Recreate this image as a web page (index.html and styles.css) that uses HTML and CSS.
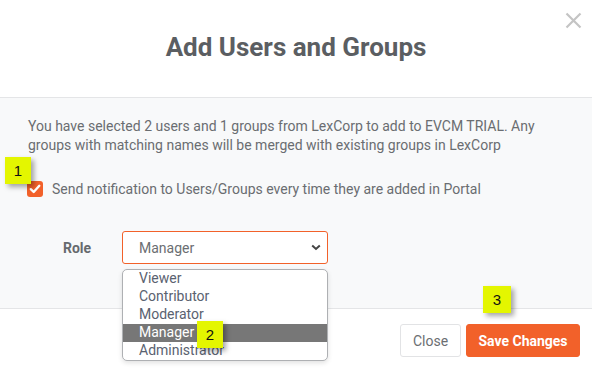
FILE: index.html
```html
<!DOCTYPE html>
<html>
<head>
<meta charset="utf-8">
<link rel="stylesheet" href="styles.css">
</head>
<body>
<div class="modal">
  <div class="modal-header">
    <h2 class="title">Add Users and Groups</h2>
    <span class="close-x">
      <svg width="17" height="17" viewBox="0 0 17 17"><path d="M1.5 1.5 L15.5 15.5 M15.5 1.5 L1.5 15.5" stroke="#c4c4c4" stroke-width="2.2" fill="none"/></svg>
    </span>
  </div>
  <div class="modal-body">
    <p class="intro">You have selected 2 users and 1 groups from LexCorp to add to EVCM TRIAL. Any groups with matching names will be merged with existing groups in LexCorp</p>
    <div class="check-row">
      <span class="checkbox">
        <svg width="16" height="16" viewBox="0 0 16 16"><path d="M3.8 8.2 L6.7 11 L12.3 4.8" stroke="#fff" stroke-width="2.4" fill="none" stroke-linecap="round" stroke-linejoin="round"/></svg>
      </span>
      <span class="check-label">Send notification to Users/Groups every time they are added in Portal</span>
      <span class="badge badge-1">1</span>
    </div>
    <div class="role-row">
      <label class="role-label">Role</label>
      <div class="select-wrap">
        <div class="select">
          <span>Manager</span>
          <svg class="chev" width="10" height="7" viewBox="0 0 10 7"><path d="M1.2 1.5 L5 5 L8.8 1.5" stroke="#444" stroke-width="2" fill="none"/></svg>
        </div>
        <ul class="dropdown">
          <li>Viewer</li>
          <li>Contributor</li>
          <li>Moderator</li>
          <li class="active">Manager</li>
          <li>Administrator</li>
        </ul>
        <span class="badge badge-2">2</span>
      </div>
    </div>
  </div>
  <div class="modal-footer">
    <button class="btn btn-close">Close</button>
    <button class="btn btn-save">Save Changes</button>
    <span class="badge badge-3">3</span>
  </div>
</div>
</body>
</html>
```

FILE: styles.css
```css
* { box-sizing: border-box; }
html, body { margin: 0; padding: 0; background: #fff; }
body { font-family: Roboto, "Liberation Sans", Arial, sans-serif; }

.modal { width: 592px; height: 374px; position: relative; overflow: hidden; }

.modal-header {
  height: 98px;
  border-bottom: 1px solid #e4e5e7;
  display: flex;
  align-items: center;
  justify-content: center;
  position: relative;
}
.title {
  margin: 0;
  padding-bottom: 3px;
  font-size: 26px;
  font-weight: 700;
  color: #5b5e62;
}
.close-x { position: absolute; left: 565px; top: 12px; width: 17px; height: 17px; }
.close-x svg { display: block; }

.modal-body {
  height: 211px;
  background: #f8f9fa;
  border-bottom: 1px solid #e4e5e7;
  padding: 19px 20px 0 28px;
}
.intro {
  margin: 0;
  font-size: 14px;
  line-height: 19px;
  color: #6a6d71;
}
.check-row {
  display: flex;
  align-items: center;
  margin-top: 25px;
  margin-left: -1px;
  position: relative;
  height: 18px;
}
.checkbox {
  width: 16px; height: 16px;
  background: #f2612a;
  border-radius: 3px;
  display: inline-block;
}
.checkbox svg { display: block; }
.check-label {
  margin-left: 9px;
  font-size: 14px;
  color: #6a6d71;
}
.role-row {
  display: flex;
  align-items: center;
  margin-top: 33px;
  padding-left: 35px;
}
.role-label {
  width: 59px;
  font-size: 14px;
  font-weight: 700;
  color: #666a6e;
}
.select-wrap { position: relative; }
.select {
  width: 206px;
  height: 33px;
  border: 1px solid #f2612a;
  border-radius: 3px;
  background: #fff;
  display: flex;
  align-items: center;
  justify-content: space-between;
  padding: 0 6px 0 16px;
  font-size: 14px;
  color: #6b6e72;
}
.chev { display: block; }

.dropdown {
  position: absolute;
  left: 0;
  top: 38px;
  width: 206px;
  margin: 0;
  padding: 0;
  list-style: none;
  background: #fff;
  border: 1px solid #aeb0b3;
  border-radius: 5px;
  box-shadow: 0 2px 5px rgba(0,0,0,0.12);
  overflow: hidden;
  z-index: 5;
}
.dropdown li {
  height: 18px;
  line-height: 17px;
  padding-left: 16px;
  font-size: 14px;
  color: #5a6270;
}
.dropdown li.active {
  background: #777777;
  color: #ffffff;
}

.badge {
  position: absolute;
  width: 26px;
  height: 27px;
  background: #e4f600;
  color: #111;
  font-family: "Liberation Sans", Arial, sans-serif;
  font-size: 15px;
  display: flex;
  align-items: center;
  justify-content: center;
  box-shadow: 3px 3px 5px rgba(0,0,0,0.35);
  z-index: 10;
}
.badge-1 { left: -22px; top: -23px; }
.badge-2 { left: 75px; top: 90px; }
.badge-3 { left: 483px; top: -23px; width: 28px; }

.modal-footer {
  position: relative;
  height: 64px;
  display: flex;
  justify-content: flex-end;
  align-items: flex-start;
  padding: 15px 12px 0 0;
  gap: 5px;
}
.btn {
  height: 33px;
  border-radius: 3px;
  font-family: Roboto, "Liberation Sans", Arial, sans-serif;
  font-size: 14px;
  padding: 0;
  cursor: pointer;
}
.btn-close {
  width: 61px;
  background: #fff;
  border: 1px solid #e2e3e5;
  color: #6b6e72;
}
.btn-save {
  width: 114px;
  background: #f2612a;
  border: 1px solid #f2612a;
  color: #fff;
  font-weight: 700;
}
```
